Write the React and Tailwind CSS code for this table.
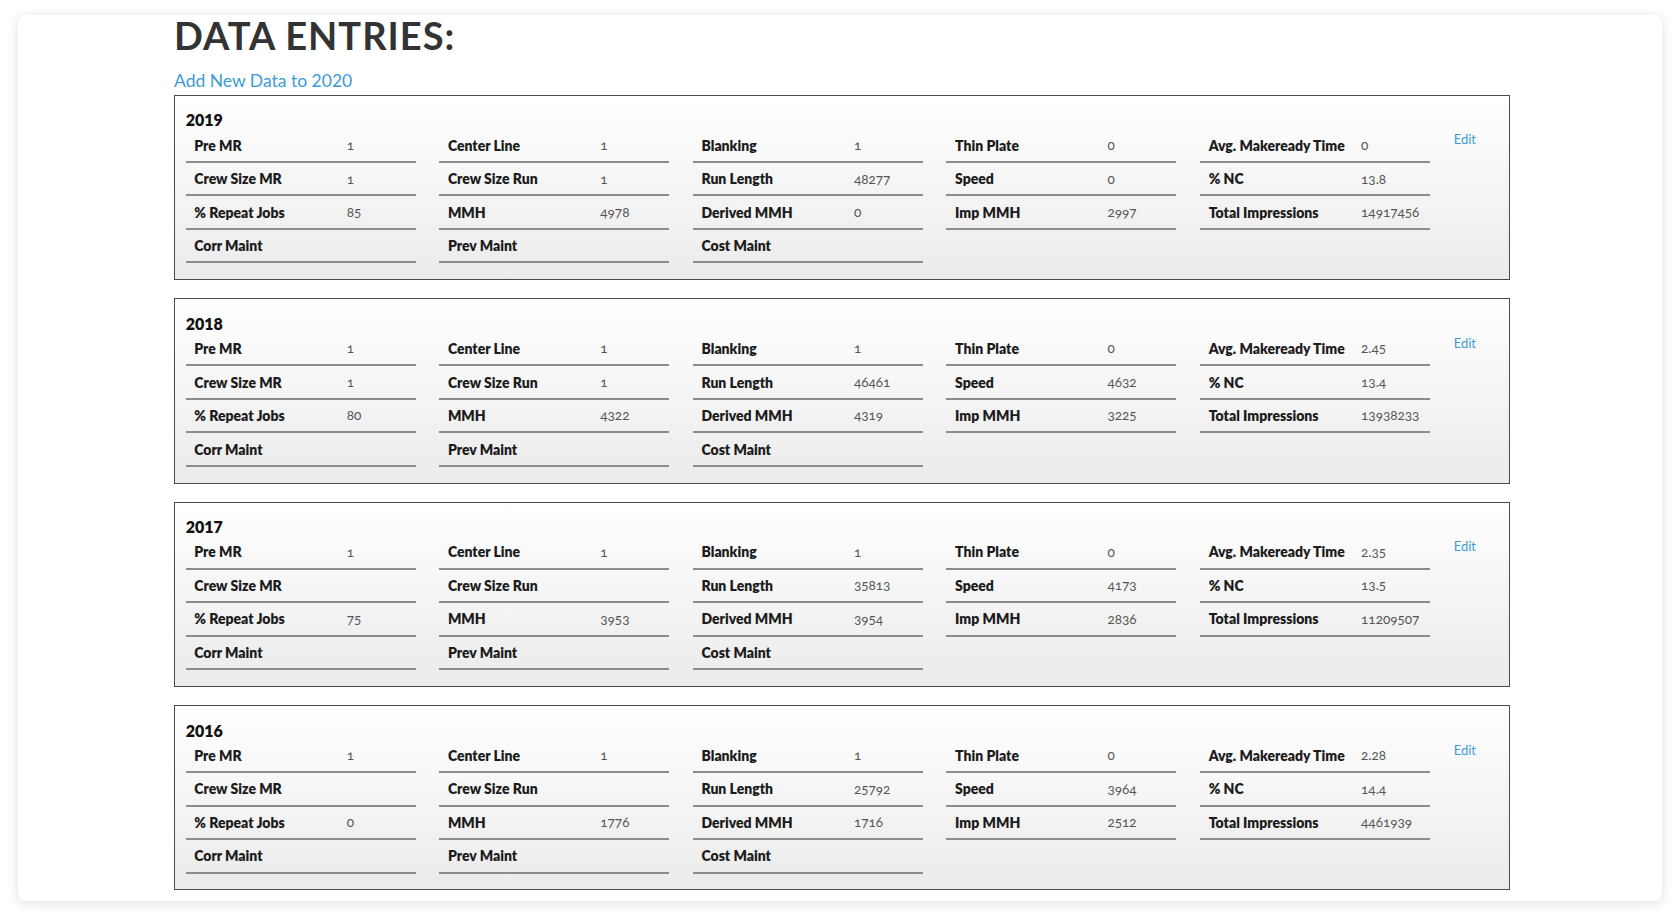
import React from 'react';

const entries = [
  {
    year: '2019',
    cols: [
      [['Pre MR', '1'], ['Crew Size MR', '1'], ['% Repeat Jobs', '85'], ['Corr Maint', '']],
      [['Center Line', '1'], ['Crew Size Run', '1'], ['MMH', '4978'], ['Prev Maint', '']],
      [['Blanking', '1'], ['Run Length', '48277'], ['Derived MMH', '0'], ['Cost Maint', '']],
      [['Thin Plate', '0'], ['Speed', '0'], ['Imp MMH', '2997']],
      [['Avg. Makeready Time', '0'], ['% NC', '13.8'], ['Total Impressions', '14917456']],
    ],
  },
  {
    year: '2018',
    cols: [
      [['Pre MR', '1'], ['Crew Size MR', '1'], ['% Repeat Jobs', '80'], ['Corr Maint', '']],
      [['Center Line', '1'], ['Crew Size Run', '1'], ['MMH', '4322'], ['Prev Maint', '']],
      [['Blanking', '1'], ['Run Length', '46461'], ['Derived MMH', '4319'], ['Cost Maint', '']],
      [['Thin Plate', '0'], ['Speed', '4632'], ['Imp MMH', '3225']],
      [['Avg. Makeready Time', '2.45'], ['% NC', '13.4'], ['Total Impressions', '13938233']],
    ],
  },
  {
    year: '2017',
    cols: [
      [['Pre MR', '1'], ['Crew Size MR', ''], ['% Repeat Jobs', '75'], ['Corr Maint', '']],
      [['Center Line', '1'], ['Crew Size Run', ''], ['MMH', '3953'], ['Prev Maint', '']],
      [['Blanking', '1'], ['Run Length', '35813'], ['Derived MMH', '3954'], ['Cost Maint', '']],
      [['Thin Plate', '0'], ['Speed', '4173'], ['Imp MMH', '2836']],
      [['Avg. Makeready Time', '2.35'], ['% NC', '13.5'], ['Total Impressions', '11209507']],
    ],
  },
  {
    year: '2016',
    cols: [
      [['Pre MR', '1'], ['Crew Size MR', ''], ['% Repeat Jobs', '0'], ['Corr Maint', '']],
      [['Center Line', '1'], ['Crew Size Run', ''], ['MMH', '1776'], ['Prev Maint', '']],
      [['Blanking', '1'], ['Run Length', '25792'], ['Derived MMH', '1716'], ['Cost Maint', '']],
      [['Thin Plate', '0'], ['Speed', '3964'], ['Imp MMH', '2512']],
      [['Avg. Makeready Time', '2.28'], ['% NC', '14.4'], ['Total Impressions', '4461939']],
    ],
  },
];

function EntryBox({ entry }) {
  return (
    <div className="h-[185.2px] border border-[#4a4a4a] bg-linear-to-b from-white to-[#ebebeb] pl-[10.7px] pt-[13.5px]">
      <div className="h-5 pt-px text-[16px] font-extrabold leading-5 text-[#111]">{entry.year}</div>
      <div className="flex gap-[23.6px]">
        {entry.cols.map((col, i) => (
          <div key={i} className="w-[230px]">
            {col.map(([label, value]) => (
              <div key={label} className="flex h-[33.5px] items-center border-b-2 border-[#8c8c8c]">
                <span className="w-[161px] shrink-0 pl-[8.6px] text-[14px] font-extrabold text-[#1c1c1c]">{label}</span>
                <span className="text-[13.5px] text-[#555] oldstyle-nums">{value}</span>
              </div>
            ))}
          </div>
        ))}
        <div className="text-[13px] leading-5 text-[#3d9bd6]">Edit</div>
      </div>
    </div>
  );
}

export default function App() {
  return (
    <div className="min-h-screen bg-white pt-[15px] font-['Lato','Open_Sans',sans-serif]">
      <div className="mx-[18px] rounded-lg bg-white pb-[11px] pl-[156px] pt-px shadow-[0_2px_12px_rgba(0,0,0,0.13)]">
        <div className="w-[1336px]">
          <h1 className="h-[38px] text-[38px] font-bold leading-[38px] tracking-[1px] text-[#333]">DATA ENTRIES:</h1>
          <div className="mt-[18.2px] h-[22.8px] text-[17.5px] leading-[17px] text-[#3d9bd6]">Add New Data to 2020</div>
          <div className="flex flex-col gap-[18.2px]">
            {entries.map(e => (
              <EntryBox key={e.year} entry={e} />
            ))}
          </div>
        </div>
      </div>
    </div>
  );
}
